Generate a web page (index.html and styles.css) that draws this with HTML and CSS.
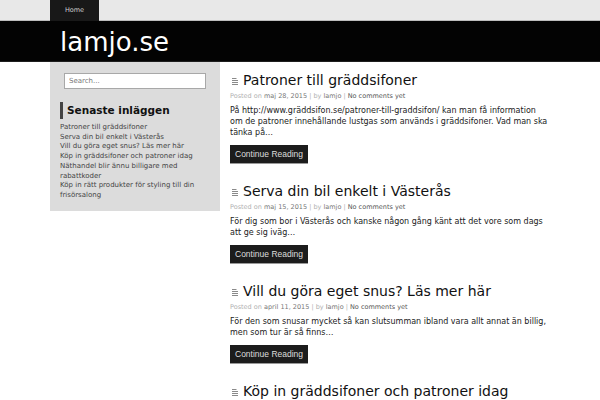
FILE: index.html
```html
<!DOCTYPE html>
<html>
<head>
<meta charset="utf-8">
<link rel="stylesheet" href="styles.css">
</head>
<body>
<nav class="topnav">
  <div class="wrap">
    <a class="tab" href="#">Home</a>
  </div>
</nav>
<header class="masthead">
  <div class="wrap">
    <h1 class="site-title">lamjo.se</h1>
  </div>
</header>
<div class="wrap main">
  <aside class="sidebar">
    <div class="search"><input class="search-input" type="text" placeholder="Search..."></div>
    <h2 class="widget-title">Senaste inläggen</h2>
    <ul class="recent">
      <li>Patroner till gräddsifoner</li>
      <li>Serva din bil enkelt i Västerås</li>
      <li>Vill du göra eget snus? Läs mer här</li>
      <li>Köp in gräddsifoner och patroner idag</li>
      <li>Näthandel blir ännu billigare med rabattkoder</li>
      <li>Köp in rätt produkter för styling till din frisörsalong</li>
    </ul>
  </aside>
  <section class="content">
    <article class="post">
      <h2 class="post-title"><svg class="icon" width="6" height="7" viewBox="0 0 6 7"><path d="M0 0.5h4.5M0 2.5h6M0 4.5h6M0 6.5h6" stroke="#8a8a8a" stroke-width="1"/></svg>Patroner till gräddsifoner</h2>
      <div class="meta">Posted on <span class="dk">maj 28, 2015</span> | by <span class="dk">lamjo</span> | <span class="dk2">No comments yet</span></div>
      <p class="excerpt">På http://www.gräddsifon.se/patroner-till-graddsifon/ kan man få information om de patroner innehållande lustgas som används i gräddsifoner. Vad man ska tänka på…</p>
      <a class="btn" href="#">Continue Reading</a>
    </article>
    <article class="post">
      <h2 class="post-title"><svg class="icon" width="6" height="7" viewBox="0 0 6 7"><path d="M0 0.5h4.5M0 2.5h6M0 4.5h6M0 6.5h6" stroke="#8a8a8a" stroke-width="1"/></svg>Serva din bil enkelt i Västerås</h2>
      <div class="meta">Posted on <span class="dk">maj 15, 2015</span> | by <span class="dk">lamjo</span> | <span class="dk2">No comments yet</span></div>
      <p class="excerpt">För dig som bor i Västerås och kanske någon gång känt att det vore som dags att ge sig iväg…</p>
      <a class="btn" href="#">Continue Reading</a>
    </article>
    <article class="post">
      <h2 class="post-title"><svg class="icon" width="6" height="7" viewBox="0 0 6 7"><path d="M0 0.5h4.5M0 2.5h6M0 4.5h6M0 6.5h6" stroke="#8a8a8a" stroke-width="1"/></svg>Vill du göra eget snus? Läs mer här</h2>
      <div class="meta">Posted on <span class="dk">april 11, 2015</span> | by <span class="dk">lamjo</span> | <span class="dk2">No comments yet</span></div>
      <p class="excerpt">För den som snusar mycket så kan slutsumman ibland vara allt annat än billig, men som tur är så finns…</p>
      <a class="btn" href="#">Continue Reading</a>
    </article>
    <article class="post">
      <h2 class="post-title"><svg class="icon" width="6" height="7" viewBox="0 0 6 7"><path d="M0 0.5h4.5M0 2.5h6M0 4.5h6M0 6.5h6" stroke="#8a8a8a" stroke-width="1"/></svg>Köp in gräddsifoner och patroner idag</h2>
    </article>
  </section>
</div>
</body>
</html>
```
FILE: styles.css
```css
html, body {
  margin: 0;
  padding: 0;
  background: #ffffff;
  font-family: "DejaVu Sans", sans-serif;
  overflow: hidden;
}
.wrap {
  width: 500px;
  margin: 0 auto;
}
.topnav {
  background: #e8e8e8;
  height: 20px;
  border-bottom: 1px solid #bdbdbd;
}
.topnav .wrap {
  display: flex;
  height: 20px;
}
.tab {
  display: block;
  width: 49px;
  height: 21px;
  background: #181818;
  color: #cfcfcf;
  font-size: 6.5px;
  line-height: 21px;
  text-align: center;
  text-decoration: none;
}
.masthead {
  background: #030303;
  height: 40px;
  border-bottom: 1px solid #1e1e1e;
}
.site-title {
  margin: 0;
  padding-left: 10px;
  font-size: 26px;
  font-weight: normal;
  color: #ffffff;
  line-height: 42px;
}
.main {
  display: flex;
  gap: 10px;
  align-items: flex-start;
}
.sidebar {
  width: 150px;
  background: #dcdcdc;
  padding: 11px 10px 10px 10px;
}
.search {
  padding-left: 4px;
}
.search-input {
  display: block;
  box-sizing: border-box;
  width: 142px;
  height: 16px;
  margin: 0;
  border: 1px solid #a8a8a8;
  background: #fff;
  padding: 0 4px;
  font-family: "DejaVu Sans", sans-serif;
  font-size: 7px;
  color: #555;
}
.search-input::placeholder {
  color: #777;
}
.widget-title {
  margin: 13px 0 4px 0;
  border-left: 3px solid #444;
  padding-left: 4px;
  font-size: 10.5px;
  font-weight: bold;
  line-height: 17px;
  color: #111;
}
.recent {
  list-style: none;
  margin: 0;
  padding: 0;
  font-size: 7px;
  line-height: 9.7px;
  color: #444;
}
.content {
  width: 320px;
  padding-top: 10px;
}
.post {
  margin-bottom: 19px;
}
.post-title {
  display: flex;
  align-items: center;
  margin: 0;
  font-size: 14px;
  font-weight: normal;
  line-height: 17px;
  color: #111;
}
.icon {
  margin: 1px 5px 0 2px;
  flex: none;
}
.meta {
  margin-top: 2px;
  font-size: 6.5px;
  line-height: 10px;
  color: #b0b0b0;
}
.meta .dk {
  color: #777;
}
.meta .dk2 {
  color: #555;
}
.excerpt {
  margin: 4px 0 4px 0;
  font-size: 8px;
  line-height: 11px;
  color: #222;
}
.btn {
  display: inline-block;
  height: 19px;
  padding: 0 5px;
  background: #1c1c1c;
  color: #dcdcdc;
  font-family: "Liberation Sans", Arial, sans-serif;
  font-size: 8.5px;
  line-height: 19px;
  text-decoration: none;
  border-bottom: 1px solid #999;
  box-sizing: border-box;
}
```
